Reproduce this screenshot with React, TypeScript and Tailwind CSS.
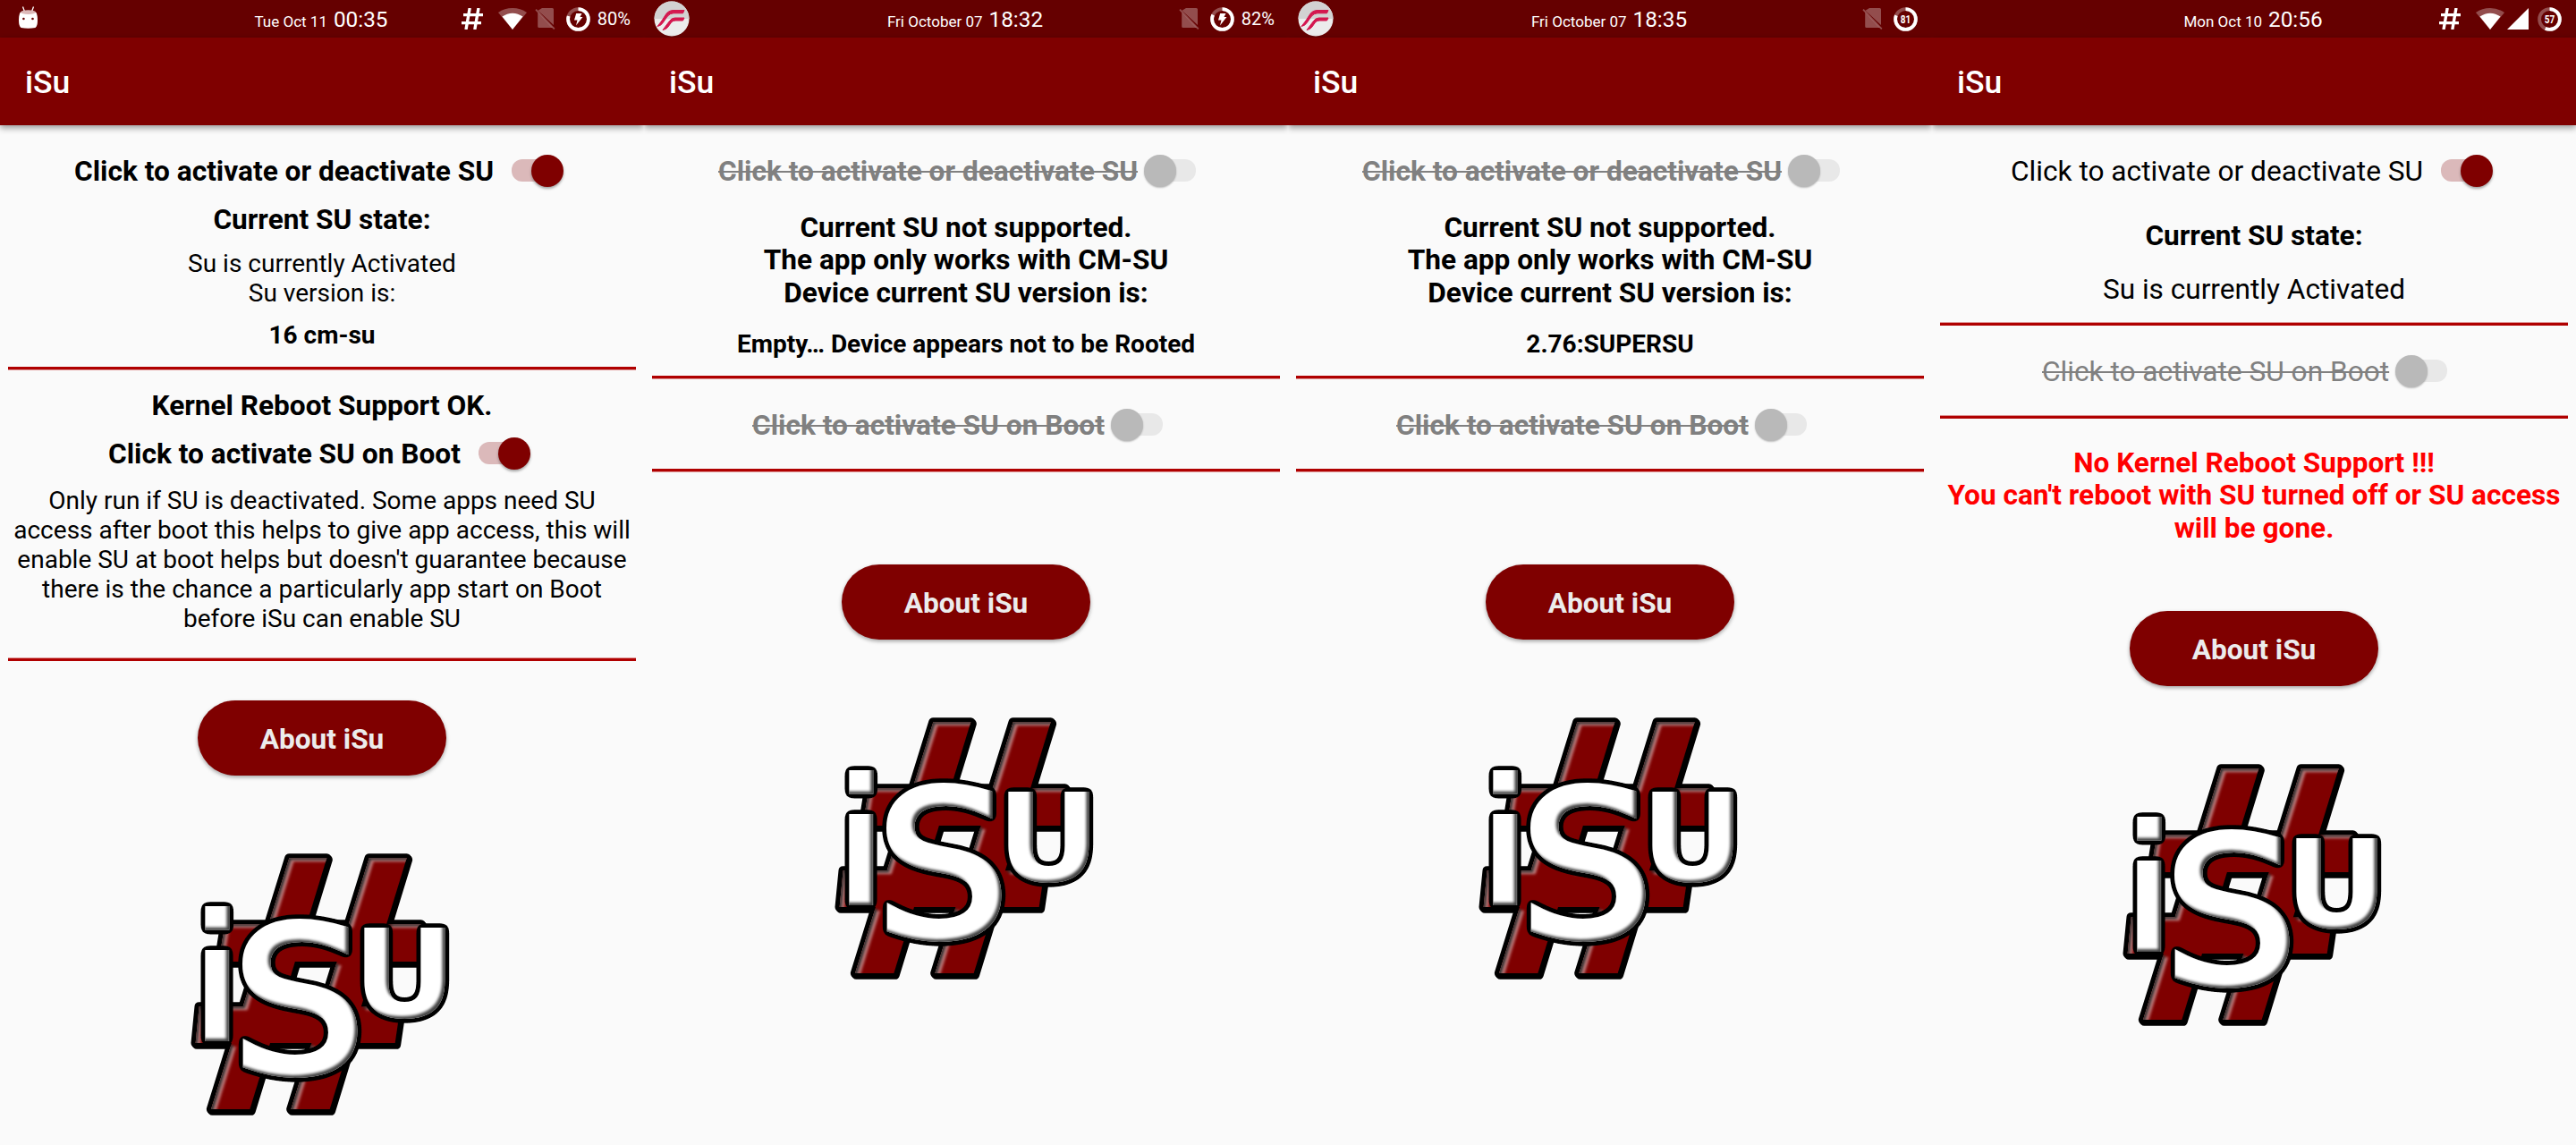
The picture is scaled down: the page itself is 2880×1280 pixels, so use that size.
import type { ReactNode } from "react";

function Switch({ on = false }: { on?: boolean }) {
  return on ? (
    <span className="relative ml-[20px] h-9 w-[58px] shrink-0">
      <span className="absolute left-0 top-[5px] h-[25px] w-[52px] rounded-[12px] bg-[#dbb9ba]" />
      <span className="absolute right-0 top-0 h-9 w-9 rounded-full bg-[#7f0000] shadow-[0_2px_3px_rgba(0,0,0,0.35)]" />
    </span>
  ) : (
    <span className="relative ml-[7px] h-9 w-[58px] shrink-0">
      <span className="absolute right-0 top-[5px] h-[25px] w-[52px] rounded-[12px] bg-[#e8e8e8]" />
      <span className="absolute left-0 top-0 h-9 w-9 rounded-full bg-[#b9b9b9] shadow-[0_1px_2px_rgba(0,0,0,0.25)]" />
    </span>
  );
}

function SwitchRow({ label, on = false, className }: { label: string; on?: boolean; className: string }) {
  return (
    <div className={`flex h-9 items-center self-start text-[31.65px] leading-9 ${className}`}>
      <span className={on ? "pt-0.5 text-black" : "pt-0.5 text-[#808080] line-through decoration-2"}>{label}</span>
      <Switch on={on} />
    </div>
  );
}

function Divider({ softTop = false, className }: { softTop?: boolean; className: string }) {
  return (
    <div
      className={`mr-[9px] ml-[9px] h-1 self-stretch border-[#dd9494] bg-[#b00000] bg-clip-padding ${softTop ? "border-t" : "border-b"} ${className}`}
    />
  );
}

function AboutButton({ className }: { className: string }) {
  return (
    <button
      className={`flex h-[84px] w-[278px] shrink-0 items-center justify-center rounded-full bg-[#7f0000] pt-1 text-[31.6px] font-bold leading-9 text-[#ececec] shadow-[0_2px_4px_rgba(0,0,0,0.35)] ${className}`}
    >
      About iSu
    </button>
  );
}

function HashShape() {
  return (
    <>
      <path d="M400 88H526L268 930H138Z" />
      <path d="M668 88H794L536 930H406Z" />
      <path d="M184 310H842L832 435H164Z" />
      <path d="M98 586H773L755 708H86Z" />
    </>
  );
}

function Logo() {
  return (
    <svg viewBox="0 0 1020 1020" className="mt-[63px] h-[340px] w-[340px] shrink-0">
      <defs>
        <filter id="hashBevel" x="-5%" y="-5%" width="110%" height="110%" colorInterpolationFilters="sRGB">
          <feOffset in="SourceAlpha" dx="16" dy="12" result="o" />
          <feGaussianBlur in="o" stdDeviation="4" result="b" />
          <feFlood floodColor="#c07c7c" />
          <feComposite in2="SourceAlpha" operator="in" result="c" />
          <feComposite in="c" in2="b" operator="out" result="light" />
          <feOffset in="SourceAlpha" dx="7" dy="6" result="o2" />
          <feGaussianBlur in="o2" stdDeviation="4" result="b2" />
          <feFlood floodColor="#303030" />
          <feComposite in2="SourceAlpha" operator="in" result="c2" />
          <feComposite in="c2" in2="b2" operator="out" result="dark" />
          <feMerge>
            <feMergeNode in="SourceGraphic" />
            <feMergeNode in="light" />
            <feMergeNode in="dark" />
          </feMerge>
        </filter>
        <filter id="whiteBevel" x="-10%" y="-10%" width="120%" height="120%" colorInterpolationFilters="sRGB">
          <feGaussianBlur in="SourceAlpha" stdDeviation="10" result="spread" />
          <feComponentTransfer in="spread" result="outline">
            <feFuncA type="linear" slope="25" intercept="-1.18" />
          </feComponentTransfer>
          <feOffset in="SourceAlpha" dx="-8" dy="-8" result="o" />
          <feGaussianBlur in="o" stdDeviation="5" result="b" />
          <feFlood floodColor="#444444" />
          <feComposite in2="SourceAlpha" operator="in" result="c" />
          <feComposite in="c" in2="b" operator="out" result="shade" />
          <feMerge>
            <feMergeNode in="outline" />
            <feMergeNode in="SourceGraphic" />
            <feMergeNode in="shade" />
          </feMerge>
        </filter>
      </defs>
      <g stroke="#000" strokeWidth="31" strokeLinejoin="round">
        <HashShape />
        <g transform="translate(4 5)">
          <HashShape />
        </g>
      </g>
      <g fill="#7f0000" filter="url(#hashBevel)">
        <HashShape />
      </g>
      <g fill="#fff" filter="url(#whiteBevel)">
        <rect x="118" y="249" width="81" height="80" />
        <rect x="118" y="396" width="79" height="306" />
        <text transform="translate(209 803) scale(1.045 1)" fontSize="672" stroke="#fff" strokeWidth="24" className="font-['DejaVu_Sans']">S</text>
        <text transform="translate(613 622) scale(1.042 1)" fontSize="412" fontWeight="700" className="font-['DejaVu_Sans']">U</text>
      </g>
    </svg>
  );
}

function HashIcon() {
  return (
    <svg viewBox="0 0 24 24" className="mr-[17px] h-6 w-6" fill="none" stroke="#fff" strokeWidth="3.4">
      <path d="M9.2 0L5 24M19 0L14.8 24M2 7.6H24M0 16.6H22" />
    </svg>
  );
}

function WifiIcon() {
  return (
    <svg viewBox="0 0 32 24" className="h-6 w-8" fill="#fff">
      <path d="M16 24L0 5Q7 0 16 0T32 5Z" fillOpacity="0.3" />
      <path d="M16 24L4.5 9.6Q10 5.8 16 5.8T27.500 9.600Z" />
    </svg>
  );
}

function SimIcon() {
  return (
    <svg viewBox="0 0 23 24" className="mr-3 h-6 w-[23px]">
      <path d="M8 0H19.500Q21 0 21 1.500V19L3.500 2.800ZM3.200 5L19.800 22H4.700Q3.200 22 3.200 20.500Z" fill="#fff" fillOpacity="0.3" />
      <path d="M1 1.600L21.800 23.400" stroke="#fff" strokeOpacity="0.3" strokeWidth="1.800" />
    </svg>
  );
}

function SignalIcon() {
  return (
    <svg viewBox="0 0 24 24" className="ml-[3px] mr-[10px] h-6 w-6" fill="#fff">
      <path d="M24 0V24H0Z" />
    </svg>
  );
}

function BatteryRing({ level, label }: { level: number; label?: string }) {
  return (
    <svg viewBox="0 0 27 27" className="h-[27px] w-[27px]">
      <circle cx="13.5" cy="13.5" r="11.4" fill="none" stroke="#fff" strokeOpacity="0.3" strokeWidth="3.8" />
      <circle
        cx="13.5"
        cy="13.5"
        r="11.4"
        fill="none"
        stroke="#fff"
        strokeWidth="3.8"
        pathLength="100"
        strokeDasharray={`${level} 100`}
        transform="rotate(-90 13.5 13.5)"
      />
      {label ? (
        <text x="13.5" y="18.3" textAnchor="middle" fontSize="13.5" fontWeight="700" fill="#fff" textLength="11.5" lengthAdjust="spacingAndGlyphs">
          {label}
        </text>
      ) : (
        <path d="M11.200 7H17.500L15.500 11H18.500L11 20.500L12.500 14.500H9Z" fill="#fff" />
      )}
    </svg>
  );
}

function RobotIcon() {
  return (
    <svg viewBox="0 0 21 25" className="ml-[21px] mb-[3px] h-[25px] w-[21px]">
      <path d="M4.500 0.500L6.500 6M16.500 0.500L14.500 6" stroke="#fff" strokeWidth="1.300" />
      <path d="M1.500 7Q10.500 4.500 19.500 7Q21 10 21 16Q21 22 18.500 24Q10.500 25.500 2.500 24Q0 22 0 16Q0 10 1.500 7Z" fill="#fff" />
      <ellipse cx="10.500" cy="6.600" rx="8.500" ry="2.300" fill="#dcb8b8" />
      <circle cx="5.400" cy="14" r="1.300" fill="#650000" />
      <circle cx="15.500" cy="14" r="1.300" fill="#650000" />
    </svg>
  );
}

function RomIcon() {
  return (
    <svg viewBox="0 0 40 40" className="ml-[11px] h-10 w-10">
      <circle cx="20" cy="20" r="19.500" fill="#ececec" />
      <path d="M0.500 20A19.500 19.500 0 0 1 39.500 20Z" fill="#d2d2d2" />
      <path
        d="M4 28.500Q8 28 10.500 24L15 17.500Q18 13.800 22 13.800H32.500L34 10.500H22Q16.500 10.500 13.500 15L9 22Z"
        fill="#d4174f"
        stroke="#d4174f"
        strokeWidth="1"
      />
      <path
        d="M10 32.500Q14 32 16 29L19.500 24Q21.500 22 24 22H32.500L34 19H23.500Q20 19 17.500 22.500Z"
        fill="#d4174f"
        stroke="#d4174f"
        strokeWidth="1"
      />
    </svg>
  );
}

function Phone({ left, date, time, status, children }: { left?: ReactNode; date: string; time: string; status: ReactNode; children: ReactNode }) {
  return (
    <section className="flex h-[1280px] w-[720px] flex-col overflow-hidden bg-[#fafafa]">
      <div className="grid h-[42px] shrink-0 grid-cols-[1fr_auto_1fr] items-center bg-[#650000] text-white">
        <div className="flex h-[42px] items-center">{left}</div>
        <div className="flex items-baseline gap-[7px] pt-px pr-0.5">
          <span className="text-[17px]">{date}</span>
          <span className="text-[24.3px] leading-[38px]">{time}</span>
        </div>
        <div className="flex h-[42px] items-center justify-end pr-4">{status}</div>
      </div>
      <header className="flex h-[98px] shrink-0 items-center bg-[#7f0000] pl-7 pt-1 text-[35.5px] font-medium text-white shadow-[0_3px_7px_rgba(0,0,0,0.4)]">
        iSu
      </header>
      <main className="flex flex-col items-center text-center text-[31.6px] leading-9 text-black">{children}</main>
    </section>
  );
}

function Percent({ children }: { children: string }) {
  return <span className="-mr-px ml-2 text-[20px] leading-6">{children}</span>;
}

function UnsupportedContent({ version }: { version: string }) {
  return (
    <>
      <SwitchRow label="Click to activate or deactivate SU" className="mt-[33px] ml-[83px] font-bold" />
      <p className="mt-[28px] font-bold leading-[36.4px]">
        Current SU not supported.
        <br />
        The app only works with CM-SU
        <br />
        Device current SU version is:
      </p>
      <p className="mt-[22px] text-[28px] font-bold leading-[33px]">{version}</p>
      <Divider className="mt-[19px]" />
      <SwitchRow label="Click to activate SU on Boot" className="mt-[33px] ml-[121px] font-bold" />
      <Divider className="mt-[31px]" />
      <AboutButton className="mt-[103px]" />
      <Logo />
    </>
  );
}

export default function App() {
  return (
    <div className="flex h-[1280px] w-[2880px] overflow-hidden whitespace-nowrap bg-[#fafafa] font-['Roboto',sans-serif]">
      <Phone
        left={<RobotIcon />}
        date="Tue Oct 11"
        time="00:35"
        status={
          <>
            <HashIcon />
            <WifiIcon />
            <span className="w-[9px]" />
            <SimIcon />
            <BatteryRing level={80} />
            <Percent>80%</Percent>
          </>
        }
      >
        <SwitchRow on label="Click to activate or deactivate SU" className="mt-[33px] ml-[83px] font-bold" />
        <p className="mt-[19px] font-bold">Current SU state:</p>
        <p className="mt-[14px] text-[28px] leading-[33px]">
          Su is currently Activated
          <br />
          Su version is:
        </p>
        <p className="mt-[14px] text-[28px] font-bold leading-[33px]">16 cm-su</p>
        <Divider className="mt-[19px]" />
        <p className="mt-[22px] font-bold">Kernel Reboot Support OK.</p>
        <SwitchRow on label="Click to activate SU on Boot" className="mt-[17px] ml-[121px] font-bold" />
        <p className="mt-[18px] text-[28px] leading-[33px]">
          Only run if SU is deactivated. Some apps need SU
          <br />
          access after boot this helps to give app access, this will
          <br />
          enable SU at boot helps but doesn't guarantee because
          <br />
          there is the chance a particularly app start on Boot
          <br />
          before iSu can enable SU
        </p>
        <Divider softTop className="mt-[27px]" />
        <AboutButton className="mt-[44px]" />
        <Logo />
      </Phone>

      <Phone
        left={<RomIcon />}
        date="Fri October 07"
        time="18:32"
        status={
          <>
            <SimIcon />
            <BatteryRing level={82} />
            <Percent>82%</Percent>
          </>
        }
      >
        <UnsupportedContent version="Empty… Device appears not to be Rooted" />
      </Phone>

      <Phone
        left={<RomIcon />}
        date="Fri October 07"
        time="18:35"
        status={
          <>
            <SimIcon />
            <BatteryRing level={81} label="81" />
          </>
        }
      >
        <UnsupportedContent version="2.76:SUPERSU" />
      </Phone>

      <Phone
        date="Mon Oct 10"
        time="20:56"
        status={
          <>
            <HashIcon />
            <WifiIcon />
            <SignalIcon />
            <BatteryRing level={57} label="57" />
          </>
        }
      >
        <SwitchRow on label="Click to activate or deactivate SU" className="mt-[33px] ml-[88px]" />
        <p className="mt-[37px] font-bold">Current SU state:</p>
        <p className="mt-[24px]">Su is currently Activated</p>
        <Divider softTop className="mt-[18px]" />
        <SwitchRow label="Click to activate SU on Boot" className="mt-[33px] ml-[123px]" />
        <Divider softTop className="mt-[31px]" />
        <p className="mt-[32px] font-bold leading-[36.4px] text-[#ff0000]">
          No Kernel Reboot Support !!!
          <br />
          You can't reboot with SU turned off or SU access
          <br />
          will be gone.
        </p>
        <AboutButton className="mt-[74px]" />
        <Logo />
      </Phone>
    </div>
  );
}
